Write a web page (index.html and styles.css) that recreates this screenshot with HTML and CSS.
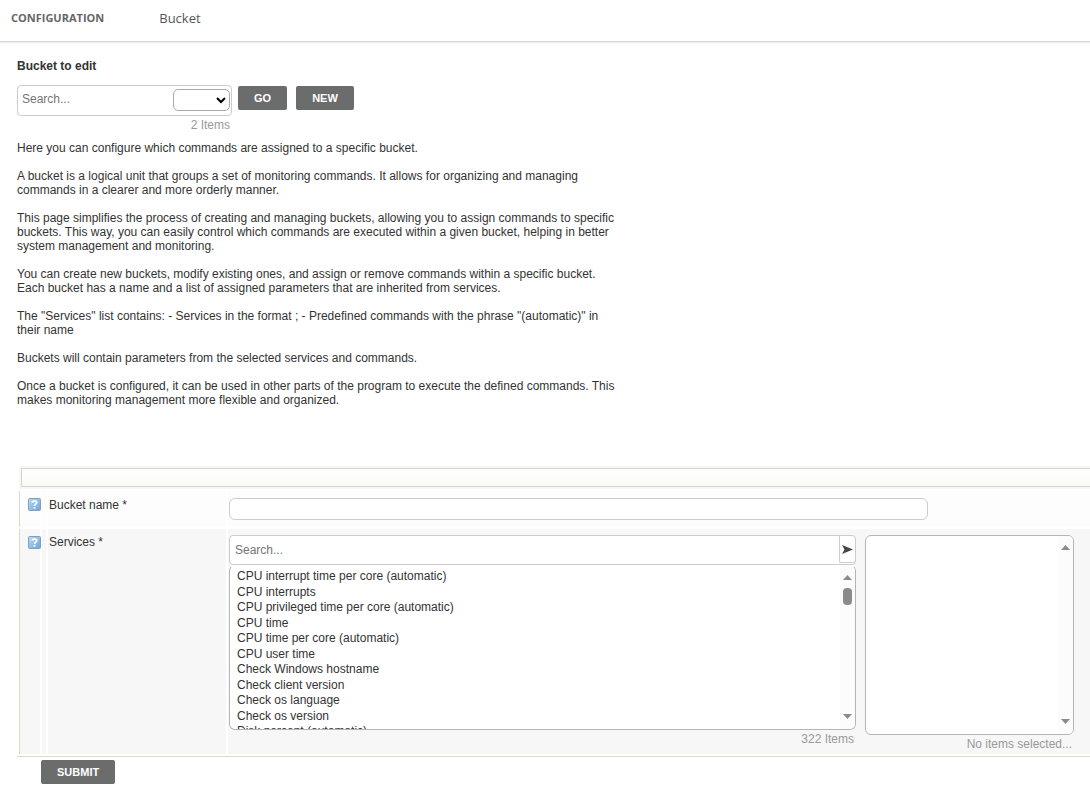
FILE: index.html
```html
<!doctype html>
<html lang="en">
<head>
    <meta charset="UTF-8">
    <meta name="viewport" content="width=device-width, initial-scale=1.0">
    <title>Configuration - Bucket</title>
    <link rel="stylesheet" href="styles.css">
</head>
<body>
    <header class="topbar">
        <strong class="section">CONFIGURATION</strong>
        <span class="page">Bucket</span>
    </header>

    <main>
        <!-- bucket picker -->
        <form class="picker">
            <h1>Bucket to edit</h1>
            <div class="picker-row">
                <div class="picker-box">
                    <input type="text" placeholder="Search..." aria-label="Search bucket">
                    <select aria-label="Bucket"><option></option></select>
                </div>
                <button type="button" class="btn">GO</button>
                <button type="button" class="btn">NEW</button>
            </div>
            <div class="picker-count">2 Items</div>
        </form>

        <div class="description">
            <p>Here you can configure which commands are assigned to a specific bucket.</p>
            <p>A bucket is a logical unit that groups a set of monitoring commands. It allows for organizing and managing commands in a clearer and more orderly manner.</p>
            <p>This page simplifies the process of creating and managing buckets, allowing you to assign commands to specific buckets. This way, you can easily control which commands are executed within a given bucket, helping in better system management and monitoring.</p>
            <p>You can create new buckets, modify existing ones, and assign or remove commands within a specific bucket. Each bucket has a name and a list of assigned parameters that are inherited from services.</p>
            <p>The "Services" list contains: - Services in the format ; - Predefined commands with the phrase "(automatic)" in their name</p>
            <p>Buckets will contain parameters from the selected services and commands.</p>
            <p>Once a bucket is configured, it can be used in other parts of the program to execute the defined commands. This makes monitoring management more flexible and organized.</p>
        </div>

        <!-- edit form -->
        <form class="editor">
            <div class="editor-head"><div></div></div>

            <div class="row">
                <div class="cell help">
                    <svg width="13" height="13" viewBox="0 0 13 13" role="img" aria-label="Help">
                        <defs>
                            <linearGradient id="helpFill" x1="0" y1="0" x2="1" y2="1">
                                <stop offset="0" stop-color="#b4dcfb"/>
                                <stop offset="1" stop-color="#6fa3e0"/>
                            </linearGradient>
                        </defs>
                        <rect x=".5" y=".5" width="12" height="12" rx="1" fill="url(#helpFill)" stroke="#8b9cab"/>
                        <path d="M4.2 4.7C4.4 2.6 8.8 2.6 8.7 4.8C8.6 6.2 6.6 6.2 6.5 8" fill="none" stroke="#fff" stroke-width="1.7"/>
                        <rect x="5.6" y="9" width="1.8" height="1.6" fill="#fff"/>
                    </svg>
                </div>
                <div class="cell"></div>
                <div class="cell name"><label for="bucketName">Bucket name *</label></div>
                <div class="cell field"><input type="text" id="bucketName" class="bucket-name"></div>
            </div>

            <div class="row row-dark">
                <div class="cell help">
                    <svg width="13" height="13" viewBox="0 0 13 13" role="img" aria-label="Help">
                        <rect x=".5" y=".5" width="12" height="12" rx="1" fill="url(#helpFill)" stroke="#8b9cab"/>
                        <path d="M4.2 4.7C4.4 2.6 8.8 2.6 8.7 4.8C8.6 6.2 6.6 6.2 6.5 8" fill="none" stroke="#fff" stroke-width="1.7"/>
                        <rect x="5.6" y="9" width="1.8" height="1.6" fill="#fff"/>
                    </svg>
                </div>
                <div class="cell"></div>
                <div class="cell name"><label for="services">Services *</label></div>
                <div class="cell field lists">
                    <div class="available">
                        <div class="search">
                            <input type="text" placeholder="Search..." aria-label="Search services">
                            <button type="button" aria-label="Add all">
                                <svg width="11" height="9" viewBox="0 0 11 9"><path d="M0 0L11 4.5L0 9L2.5 4.5Z" fill="#444"/></svg>
                            </button>
                        </div>
                        <div class="listbox">
                            <select id="services" multiple>
                                <option>CPU interrupt time per core (automatic)</option>
                                <option>CPU interrupts</option>
                                <option>CPU privileged time per core (automatic)</option>
                                <option>CPU time</option>
                                <option>CPU time per core (automatic)</option>
                                <option>CPU user time</option>
                                <option>Check Windows hostname</option>
                                <option>Check client version</option>
                                <option>Check os language</option>
                                <option>Check os version</option>
                                <option>Disk percent (automatic)</option>
                            </select>
                            <div class="scroll">
                                <svg width="9" height="5" viewBox="0 0 9 5"><path d="M0 5L4.5 0L9 5Z" fill="#8b8b8b"/></svg>
                                <span class="thumb"></span>
                                <svg class="down" width="9" height="5" viewBox="0 0 9 5"><path d="M0 0H9L4.5 5Z" fill="#8b8b8b"/></svg>
                            </div>
                        </div>
                        <div class="count">322 Items</div>
                    </div>
                    <div class="selected">
                        <div class="listbox">
                            <select multiple aria-label="Selected services"></select>
                            <div class="scroll">
                                <svg width="9" height="5" viewBox="0 0 9 5"><path d="M0 5L4.5 0L9 5Z" fill="#8b8b8b"/></svg>
                                <svg class="down" width="9" height="5" viewBox="0 0 9 5"><path d="M0 0H9L4.5 5Z" fill="#8b8b8b"/></svg>
                            </div>
                        </div>
                        <div class="count">No items selected...</div>
                    </div>
                </div>
            </div>

            <div class="editor-foot">
                <button type="button" class="btn">SUBMIT</button>
            </div>
        </form>
    </main>
</body>
</html>
```
FILE: styles.css
```css
*{
    box-sizing: border-box;
}
body{
    margin: 0;
    background: #fff;
    color: #333;
    font: 12px/14px "Liberation Sans", Arial, sans-serif;
}
input,select,button{
    font: inherit;
    color: inherit;
}
input::placeholder{
    color: #757575;
}

/* top bar */
.topbar{
    display: flex;
    gap: 55px;
    height: 42px;
    padding: 8px 11px;
    border-bottom: 1px solid #d6d6d6;
    box-shadow: 0 1px 1px #eee;
    color: #555;
    font-family: "Open Sans", sans-serif;
    line-height: 20px;
}
.section{
    color: #666;
    font-size: 11px;
    font-weight: 700;
}
.page{
    font-size: 13px;
}

/* bucket picker */
.picker{
    padding: 17px 17px 0;
}
.picker h1{
    margin: 0 0 12px;
    font-size: 12px;
    line-height: 14px;
}
.picker-row{
    display: flex;
    gap: 9px;
    align-items: flex-start;
}
.picker-box{
    display: flex;
    width: 215px;
    height: 31px;
    padding: 3px 1px;
    margin-right: -3px;
    border: 1px solid #ccc;
    border-radius: 4px;
}
.picker-box input{
    flex: 1;
    min-width: 0;
    height: 20px;
    padding: 0 3px;
    border: 0;
    outline: 0;
    background: none;
}
.picker-box select{
    width: 57px;
    height: 22px;
    border: 1px solid #aaa;
    border-radius: 5px;
    background: #fff;
    color: #000;
}
.picker-count{
    width: 213px;
    margin-top: 2px;
    color: #999;
    text-align: right;
}
.btn{
    height: 24px;
    margin-top: 1px;
    padding: 0 16px;
    border: 0;
    border-radius: 2px;
    background: #6b6c6c;
    color: #fff;
    font-size: 11px;
    font-weight: bold;
}

.description{
    max-width: 640px;
    padding: 9px 17px 0;
}
.description p{
    margin: 0 0 14px;
}

/* edit form */
.editor{
    margin-top: 59px;
    padding-left: 19px;
}
.editor-head{
    padding: 2px 0 2px 2px;
    background: #f7f7f7;
}
.editor-head div{
    height: 19px;
    border: 1px solid #d5d5c5;
    border-right: 0;
    background: linear-gradient(#fff, #fafaf5);
}
.row{
    display: grid;
    grid-template-columns: 20px 4px 178px 1fr;
    gap: 2px;
    margin-top: 2px;
    border-left: 1px solid #d9d9c8;
    min-height: 36px;
}
.cell{
    background: #fdfdfd;
}
.row-dark .cell{
    background: #f7f7f7;
}
.help{
    padding: 7px 0 0 8px;
}
.help svg{
    display: block;
}
.name{
    padding: 7px 1px;
}
.field{
    padding: 7px 16px 3px 1px;
}
.bucket-name{
    display: block;
    width: 100%;
    max-width: 699px;
    height: 22px;
    border: 1px solid #ccc;
    border-radius: 6px;
    background: #fff;
}
.row-dark .name,
.lists{
    padding-top: 6px;
}
.lists{
    display: flex;
    gap: 9px;
}
.available{
    flex: 3;
}
.selected{
    flex: 1;
}
.search{
    display: flex;
    height: 30px;
    border: 1px solid #ccc;
    border-radius: 4px;
    background: #fff;
}
.search input{
    flex: 1;
    padding: 0 5px;
    border: 0;
    outline: 0;
    background: none;
}
.search button{
    width: 16px;
    height: 27px;
    padding: 0;
    border: solid #ccc;
    border-width: 0 0 1px 1px;
    border-radius: 0 0 2px 2px;
    background: none;
    line-height: 0;
}
.listbox{
    display: flex;
    height: 165px;
    border: 1px solid #b5b5b5;
    border-radius: 6px;
    background: #fff;
    overflow: hidden;
}
.available .listbox{
    border-top-color: transparent;
}
.listbox select{
    flex: 1;
    min-width: 0;
    height: 100%;
    padding: 3px 5px 0;
    border: 0;
    outline: 0;
    background: none;
    scrollbar-width: none;
}
.listbox option{
    height: 16px;
}
.listbox option:nth-child(even){
    height: 15px;
}
.selected .listbox{
    height: 200px;
}
.scroll{
    display: flex;
    flex-direction: column;
    align-items: center;
    gap: 8px;
    width: 15px;
    padding: 9px 0 10px;
    background: #fcfcfc;
}
.thumb{
    width: 9px;
    height: 17px;
    border-radius: 4px;
    background: #8b8b8b;
}
.down{
    margin-top: auto;
}
.count{
    padding: 2px 2px 0 0;
    color: #999;
    text-align: right;
}
.editor-foot{
    margin: 2px 0 0 -2px;
    padding: 2px 24px 6px;
    border-top: 1px solid #d9d9c8;
}
```
